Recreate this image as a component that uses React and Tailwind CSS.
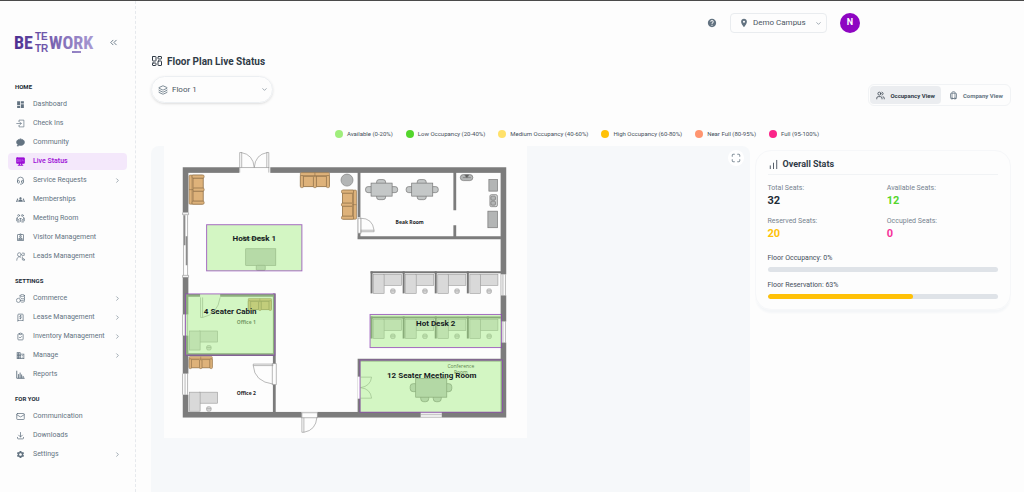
import { useState } from "react";
import {
  BarChart,
  ChevronDown,
  ChevronRight,
  ChevronsLeft,
  Layers,
  LayoutDashboard,
  Luggage,
  Mail,
  Maximize,
  Users,
} from "lucide-react";
import {
  MdBusiness,
  MdDashboard,
  MdGroups,
  MdHelp,
  MdLocationOn,
  MdOutlineAssignmentInd,
  MdSettings,
} from "react-icons/md";
import { TbClipboardCheck, TbDownload, TbHeadset, TbReceipt2 } from "react-icons/tb";

const Svg = ({ children, className }) => (
  <svg
    viewBox="0 0 24 24"
    fill="none"
    stroke="currentColor"
    strokeWidth="1.8"
    strokeLinecap="round"
    strokeLinejoin="round"
    className={className}
  >
    {children}
  </svg>
);

const CheckInIcon = ({ className }) => (
  <Svg className={className}>
    <path d="M8 7V3h13v18H8v-4M2 12h12M10 8l4 4-4 4" />
  </Svg>
);

const ChatIcon = ({ className }) => (
  <Svg className={className}>
    <path
      fill="currentColor"
      d="M12 3C6 3 1.500 6.500 1.500 11c0 2.500 1.300 4.500 3.500 6l-2 4.500c3 0 5-1 6.500-2 8 1.500 13-3 13-8.500C22.500 6.500 18 3 12 3z"
    />
  </Svg>
);

const LiveIcon = ({ className }) => (
  <Svg className={className}>
    <rect x="1" y="2" width="22" height="15" rx="2" fill="currentColor" />
    <path d="M9 17v4M15 17v4M6 22h12" strokeWidth="3" />
    <path d="M4 7h3v5H4zM10 7v5M13 7v5M17 7v3h3" stroke="#d79cf3" strokeWidth="1" />
  </Svg>
);

const MeetingIcon = ({ className }) => (
  <Svg className={className}>
    <circle cx="7" cy="4" r="2.500" />
    <circle cx="17" cy="4" r="2.500" />
    <path d="M4 9v6h4v7M1 11v7h4v4M20 9v6h-4v7M23 11v7h-4v4M10 12h4M12 12v8" />
  </Svg>
);

const LeadsIcon = ({ className }) => (
  <Svg className={className}>
    <circle cx="9" cy="7" r="5" />
    <path d="M2 22c0-6 3-9 7-9 2 0 3 .5 4 1.500M17 3h5v6h-5M17 13v8h6M20 17l3 4-3 3" />
  </Svg>
);

const CommerceIcon = ({ className }) => (
  <Svg className={className}>
    <circle cx="6.500" cy="17" r="5.500" />
    <ellipse cx="17" cy="4" rx="6" ry="2.500" />
    <path d="M11 4v6M23 4v15c0 3-8 4-10 2M14 12c3 2 9 1 9-2M14 17c4 1 9 0 9-2" />
  </Svg>
);

const ReportsIcon = ({ className }) => (
  <Svg className={className}>
    <path d="M2 3v19h20M7 21v-9M11 21V8M15 21v-8M19 21v-4" strokeWidth="2.500" />
  </Svg>
);

const menu = [
  {
    title: "HOME",
    items: [
      { label: "Dashboard", icon: MdDashboard },
      { label: "Check Ins", icon: CheckInIcon },
      { label: "Community", icon: ChatIcon },
      { label: "Live Status", icon: LiveIcon, active: true },
      { label: "Service Requests", icon: TbHeadset, more: true },
      { label: "Memberships", icon: MdGroups },
      { label: "Meeting Room", icon: MeetingIcon },
      { label: "Visitor Management", icon: MdOutlineAssignmentInd },
      { label: "Leads Management", icon: LeadsIcon },
    ],
  },
  {
    title: "SETTINGS",
    items: [
      { label: "Commerce", icon: CommerceIcon, more: true },
      { label: "Lease Management", icon: TbReceipt2, more: true },
      { label: "Inventory Management", icon: TbClipboardCheck, more: true },
      { label: "Manage", icon: MdBusiness, more: true },
      { label: "Reports", icon: ReportsIcon },
    ],
  },
  {
    title: "FOR YOU",
    items: [
      { label: "Communication", icon: Mail },
      { label: "Downloads", icon: TbDownload },
      { label: "Settings", icon: MdSettings, more: true },
    ],
  },
];

const legend = [
  { label: "Available (0-20%)", color: "bg-[#a0ee7c]" },
  { label: "Low Occupancy (20-40%)", color: "bg-[#54d62c]" },
  { label: "Medium Occupancy (40-60%)", color: "bg-[#ffe16a]" },
  { label: "High Occupancy (60-80%)", color: "bg-[#ffc107]" },
  { label: "Near Full (80-95%)", color: "bg-[#ff9570]" },
  { label: "Full (95-100%)", color: "bg-[#fb2589]" },
];

const stats = [
  { label: "Total Seats:", value: 32, color: "text-[#212b36]" },
  { label: "Available Seats:", value: 12, color: "text-[#54d62c]" },
  { label: "Reserved Seats:", value: 20, color: "text-[#ffc107]" },
  { label: "Occupied Seats:", value: 0, color: "text-[#f6339a]" },
];

const Logo = () => (
  <svg viewBox="0 0 80 24" className="h-6 w-20" role="img" aria-label="Betterwork">
    <defs>
      <linearGradient id="logo" gradientUnits="userSpaceOnUse" x1="0" y1="0" x2="80" y2="0">
        <stop offset="0" stopColor="#4b2e91" />
        <stop offset="1" stopColor="#a99bd3" />
      </linearGradient>
    </defs>
    <g fill="url(#logo)" fontWeight="700">
      <g
        fontFamily="'Liberation Sans Narrow', 'Roboto Condensed', 'Liberation Sans', sans-serif"
        fontSize="18"
      >
        <text x="0" y="19">BE</text>
        <text x="35" y="19">WORK</text>
      </g>
      <g fontFamily="'Liberation Sans', sans-serif" fontSize="10">
        <text x="21" y="10">TE</text>
        <text x="21" y="22">TR</text>
      </g>
      <rect x="58" y="21" width="9" height="2" />
    </g>
  </svg>
);

const Sidebar = () => (
  <aside className="w-[136px] shrink-0 border-r border-dashed border-[#e6e9ed] px-2">
    <div className="flex items-center justify-between pt-[29px] pr-2 pl-1.5">
      <Logo />
      <button type="button" aria-label="Collapse menu" className="text-[#637381]">
        <ChevronsLeft className="size-[11px]" />
      </button>
    </div>
    <nav className="mt-[27px] flex flex-col gap-[10px]">
      {menu.map((group) => (
        <div key={group.title}>
          <h2 className="mb-[3px] pl-[7px] text-[6px] leading-[12px] font-bold text-[#212b36]">
            {group.title}
          </h2>
          <ul className="flex flex-col gap-0.5">
            {group.items.map(({ label, icon: Icon, active, more }) => (
              <li key={label}>
                <a
                  href="#"
                  className={`flex h-[17px] items-center rounded-[4px] pr-1.5 pl-2 text-[7px] ${
                    active ? "bg-[#f4e8fb] font-medium text-[#9c0fd6]" : "text-[#637381]"
                  }`}
                >
                  <Icon className="mr-2 size-[9px] shrink-0" />
                  <span className="flex-1 whitespace-nowrap">{label}</span>
                  {more && <ChevronRight className="size-[7px]" />}
                </a>
              </li>
            ))}
          </ul>
        </div>
      ))}
    </nav>
  </aside>
);

const Header = () => (
  <header className="flex items-center justify-end gap-[13px] pt-[12px] pr-[151px]">
    <button type="button" aria-label="Help" className="text-[#637381]">
      <MdHelp className="size-[10px]" />
    </button>
    <label className="flex h-5 w-[97px] items-center rounded-[4px] border border-[#e9ecef] pr-1 pl-2 text-[#637381]">
      <MdLocationOn className="size-[10px] shrink-0" />
      <select
        aria-label="Campus"
        className="ml-1 min-w-0 flex-1 appearance-none text-[8px] text-[#4b5662] outline-none"
      >
        <option>Demo Campus</option>
      </select>
      <ChevronDown className="size-[7px] shrink-0" />
    </label>
    <button
      type="button"
      className="size-5 rounded-full bg-[#8e05c2] text-[9px] font-bold text-white"
    >
      N
    </button>
  </header>
);

// two-seat sofa, 29 x 15
const Sofa = ({ transform }) => (
  <g transform={transform} fill="#deb27a" stroke="#8d6f49" strokeWidth="0.600">
    <rect x="0" y="0" width="29" height="14" rx="1" />
    <rect x="3" y="4" width="10" height="10" />
    <rect x="16" y="4" width="10" height="10" />
    <path d="M0 3h29M14.500 0v15" />
    <rect x="0" y="3" width="3" height="12" rx="1" />
    <rect x="13" y="4" width="3" height="11" rx="1" />
    <rect x="26" y="3" width="3" height="12" rx="1" />
  </g>
);

const Desk = ({ x, y }) => (
  <g transform={`translate(${x} ${y})`} fill="#d9d9d9" stroke="#9a9a9a" strokeWidth="0.600">
    <rect x="10" y="0" width="18" height="11" />
    <rect x="0" y="0" width="10.500" height="19" />
    <rect x="17" y="14.500" width="4.500" height="4.500" rx="1.500" />
    <path d="M17 16.500h4.500" />
  </g>
);

const DeskRow = ({ y }) => (
  <g transform={`translate(0 ${y})`}>
    {[373, 405, 437, 469].map((x) => (
      <g key={x}>
        <Desk x={x} y={3} />
        <path d={`M${x - 2} 0v22`} stroke="#777" strokeWidth="2" />
      </g>
    ))}
    <path d="M370 1h130" stroke="#777" strokeWidth="2" />
  </g>
);

const Table = ({ x, y }) => (
  <g transform={`translate(${x} ${y})`} fill="#c4c7c7" stroke="#777" strokeWidth="0.700">
    <rect x="-16" y="-3" width="8" height="6" rx="2.500" />
    <rect x="8" y="-3" width="8" height="6" rx="2.500" />
    <rect x="-5" y="-10" width="9" height="6" rx="2.500" />
    <rect x="-5" y="4" width="9" height="6" rx="2.500" />
    <rect x="-10.500" y="-6.500" width="21" height="13" />
  </g>
);

const Zone = ({ x, y, width, height }) => (
  <rect
    x={x}
    y={y}
    width={width}
    height={height}
    fill="#a0ee7c"
    fillOpacity="0.450"
    stroke="#8e3fb5"
    strokeOpacity="0.750"
  />
);

const FloorPlan = () => (
  <svg
    viewBox="164 147 362 291"
    className="w-[62%] bg-[#fdfdfd]"
    role="img"
    aria-label="Floor 1 plan"
  >
    {/* outer walls */}
    <rect x="185.500" y="171" width="317" height="244" fill="none" stroke="#7c7c7c" strokeWidth="5.600" />
    {/* inner walls */}
    <g fill="none" stroke="#7c7c7c" strokeWidth="2.800">
      <path d="M358.500 173v66M357 238.500h143M454 173v38M454 226v12" />
      <path d="M188 296h87M274 294v119M188 355h87" />
      <path d="M358.500 413v-52.500H500" />
    </g>
    {/* openings */}
    <g fill="#fdfdfd">
      <rect x="239" y="168" width="31" height="6" />
      <rect x="182" y="213" width="7" height="65" />
      <rect x="182" y="315" width="7" height="21" />
      <rect x="182" y="374" width="7" height="21" />
      <rect x="499" y="275" width="7" height="21" />
      <rect x="499" y="322" width="7" height="21" />
      <rect x="301" y="412" width="16" height="7" />
      <rect x="420" y="412" width="21" height="7" />
      <rect x="357" y="218" width="3" height="16" />
      <rect x="357" y="377" width="3" height="22" />
      <rect x="200" y="294" width="20" height="4" />
      <rect x="272" y="364" width="4" height="21" />
    </g>
    {/* doors and windows */}
    <g fill="none" stroke="#8c8c8c" strokeWidth="0.600">
      <path d="M239.500 173.500v-20h2v15M268.500 173.500v-20h-2v15M241 153.500q12 2 13 15q1-13 13-15M239 168.500h30" />
      <path d="M182.500 213.500h6v2h-6zM183.500 216v60M187.500 216v60M182.500 276h6v2h-6z" />
      <path d="M184.500 216v30M186.500 237v29" strokeWidth="1.600" />
      <path d="M182.500 315v21M185 315v21M187.500 315v21M182.500 374v21M185 374v21M187.500 374v21" />
      <path d="M500 275v21M502 275v21M504.500 275v21M500 322v21M502 322v21M504.500 322v21" />
      <path d="M420 413h21M420 415h21M420 417.500h21" />
      <path d="M301 413h16v5h-16zM301.500 413v19.500h2V418M303.500 432.500q12-2 13-15" />
      <path d="M357.500 219h3v15h-3zM360 231h13.500v1.500H360M360 219q12 0 13.500 12" />
      <path d="M360 377.500h11q-1 9-11 10.500q10 1 11 10.500h-11" />
      <path d="M200.500 298v20h2v-20M202.500 318q15-3 17.500-20" />
      <path d="M273 364.500h-20v1.500h20M253 366q1 16 20 18.500M272 364h4v21h-4z" />
    </g>
    {/* furniture */}
    <Sofa transform="translate(300 173.500)" />
    <Sofa transform="translate(189 205) rotate(-90)" />
    <Sofa transform="translate(356 191) rotate(90)" />
    <Sofa transform="translate(248 299) scale(0.800)" />
    <Sofa transform="translate(189 357) scale(0.800)" />
    <circle cx="346.500" cy="181" r="6" fill="#b3b5b5" stroke="#777" strokeWidth="0.600" />
    <Table x={381} y={190.500} />
    <Table x={421.500} y={190.500} />
    <g fill="#b3b5b5" stroke="#777" strokeWidth="0.700">
      <rect x="459.500" y="175.500" width="12.500" height="6" rx="3" />
      <path d="M464 176l2 3 2-3zM462 178.500h8" fill="#555" />
      <rect x="488" y="180.500" width="8.500" height="11.500" />
      <rect x="489" y="195.500" width="7.500" height="12" rx="1.500" fill="#d0d2d2" />
      <rect x="490" y="197" width="4.500" height="4" rx="1" />
      <rect x="490" y="202" width="4.500" height="4" rx="1" />
      <rect x="487" y="212" width="9.500" height="16.500" />
    </g>
    <DeskRow y={272} />
    <DeskRow y={317} />
    <Desk x={189.500} y={331.500} />
    <Desk x={189.500} y={392.500} />
    <g fill="#c8caca" stroke="#888" strokeWidth="0.600">
      <rect x="245.500" y="249.500" width="30" height="16.500" />
      <rect x="256" y="266" width="9" height="5" rx="1" />
    </g>
    <g fill="#c4c7c7" stroke="#777" strokeWidth="0.700">
      <rect x="409.500" y="384" width="8" height="8" rx="3" />
      <rect x="443" y="384" width="8" height="8" rx="3" />
      <rect x="420" y="394" width="8" height="8" rx="3" />
      <rect x="432.500" y="394" width="8" height="8" rx="3" />
      <rect x="415" y="379" width="31" height="18.500" />
    </g>
    <g fontFamily="'Open Sans', sans-serif" fontSize="5" fontWeight="700" fill="#222" textAnchor="middle">
      <text x="409" y="225">Beak Room</text>
      <text x="246" y="325" fillOpacity="0.800">Office 1</text>
      <text x="246" y="395">Office 2</text>
      <g fontWeight="400">
        <text x="254" y="241">Reception</text>
        <text x="460" y="368">Conference</text>
        <text x="460" y="374">Room</text>
      </g>
    </g>
    {/* bookable zones */}
    <Zone x={206.500} y={225.500} width={95} height={46} />
    <Zone x={185.500} y={294.500} width={89} height={61} />
    <Zone x={369.500} y={315} width={131} height={33} />
    <Zone x={359.500} y={360.500} width={142} height={52} />
    <g fontFamily="Roboto, sans-serif" fontSize="8" fontWeight="700" fill="#161c24" textAnchor="middle">
      <text x="254" y="242">Host Desk 1</text>
      <text x="230" y="315">4 Seater Cabin</text>
      <text x="435" y="327">Hot Desk 2</text>
      <text x="431" y="378">12 Seater Meeting Room</text>
    </g>
  </svg>
);

const Progress = ({ label, value }) => (
  <div>
    <p className="text-[7px] leading-[10px] text-[#454f5b]">
      {label}: {value}%
    </p>
    <div
      role="progressbar"
      aria-label={label}
      aria-valuenow={value}
      className="mt-1 h-[5px] overflow-hidden rounded-full bg-[#dfe3e8]"
    >
      <div className="h-full rounded-full bg-[#ffc107]" style={{ width: `${value}%` }}></div>
    </div>
  </div>
);

const StatsCard = () => (
  <section className="mt-1 rounded-2xl border border-[#f6f7f9] px-3 pt-1 pb-2.5 shadow-[0_4px_2px_-1px_#f4f6f8]">
    <h2 className="flex h-[20px] items-center gap-1 border-b border-[#f1f3f5] text-[9px] font-bold text-[#303b47]">
      <BarChart className="size-[11px] text-[#454f5b]" />
      Overall Stats
    </h2>
    <dl className="mt-2 grid grid-cols-2 gap-x-2 gap-y-2">
      {stats.map((stat) => (
        <div key={stat.label}>
          <dt className="text-[7px] leading-[10px] text-[#76838f]">{stat.label}</dt>
          <dd className={`text-[11px] leading-[15px] font-bold ${stat.color}`}>{stat.value}</dd>
        </div>
      ))}
    </dl>
    <div className="mt-3 flex flex-col gap-2">
      <Progress label="Floor Occupancy" value={0} />
      <Progress label="Floor Reservation" value={63} />
    </div>
  </section>
);

const App = () => {
  const [view, setView] = useState("occupancy");

  const tabClass = (name) =>
    `flex h-[18px] items-center gap-[5px] rounded-[4px] px-1.5 text-[6px] font-bold whitespace-nowrap ${
      view === name ? "bg-[#ebedf0] text-[#303b47]" : "text-[#637381]"
    }`;

  return (
    <div className="flex min-h-screen border-t border-[#4a4a4a] bg-[#fdfdfd] font-[Roboto,sans-serif]">
      <Sidebar />
      <div className="flex min-w-0 flex-1 flex-col pr-[13px] pl-[15px]">
        <Header />
        {/* ---------- Title and filters ---------- */}
        <div className="mt-[20px] flex items-end justify-between">
          <div>
            <h1 className="flex h-4 items-center gap-1 text-[10px] font-bold text-[#303b47]">
              <LayoutDashboard className="size-[12px]" />
              Floor Plan Live Status
            </h1>
            <label className="mt-[7px] flex h-[27px] w-[122px] items-center rounded-full border border-[#eceff2] pr-1 pl-1.5 text-[#637381] shadow-sm">
              <Layers className="size-[10px] shrink-0" />
              <select
                aria-label="Floor"
                className="ml-1 min-w-0 flex-1 appearance-none text-[8px] text-[#4b5662] outline-none"
              >
                <option>Floor 1</option>
              </select>
              <ChevronDown className="size-[7px] shrink-0" />
            </label>
          </div>
          <div className="mb-[-3px] flex gap-0.5 rounded-[6px] border border-[#f1f3f5] p-px">
            <button
              type="button"
              className={tabClass("occupancy")}
              onClick={() => setView("occupancy")}
            >
              <Users className="size-[9px]" />
              Occupancy View
            </button>
            <button type="button" className={tabClass("company")} onClick={() => setView("company")}>
              <Luggage className="size-[9px]" />
              Company View
            </button>
          </div>
        </div>
        {/* ---------- Legend ---------- */}
        <ul className="mt-[26px] flex justify-center gap-[13px] pr-2 text-[6px] leading-[10px] text-[#454f5b]">
          {legend.map((item) => (
            <li key={item.label} className="flex items-center gap-1 whitespace-nowrap">
              <span className={`size-2 rounded-full ${item.color}`}></span>
              {item.label}
            </li>
          ))}
        </ul>
        {/* ---------- Plan and stats ---------- */}
        <div className="mt-[7px] grid flex-1 grid-cols-[7fr_3fr] gap-[5px]">
          <div className="relative rounded-t-lg bg-[#f6f8fa] pl-[13px]">
            <FloorPlan />
            <button
              type="button"
              aria-label="Full screen"
              className="absolute top-1 right-1.5 flex size-4 items-center justify-center rounded-full bg-white text-[#637381]"
            >
              <Maximize className="size-[10px]" />
            </button>
          </div>
          <div>
            <StatsCard />
          </div>
        </div>
      </div>
    </div>
  );
};

export default App;
